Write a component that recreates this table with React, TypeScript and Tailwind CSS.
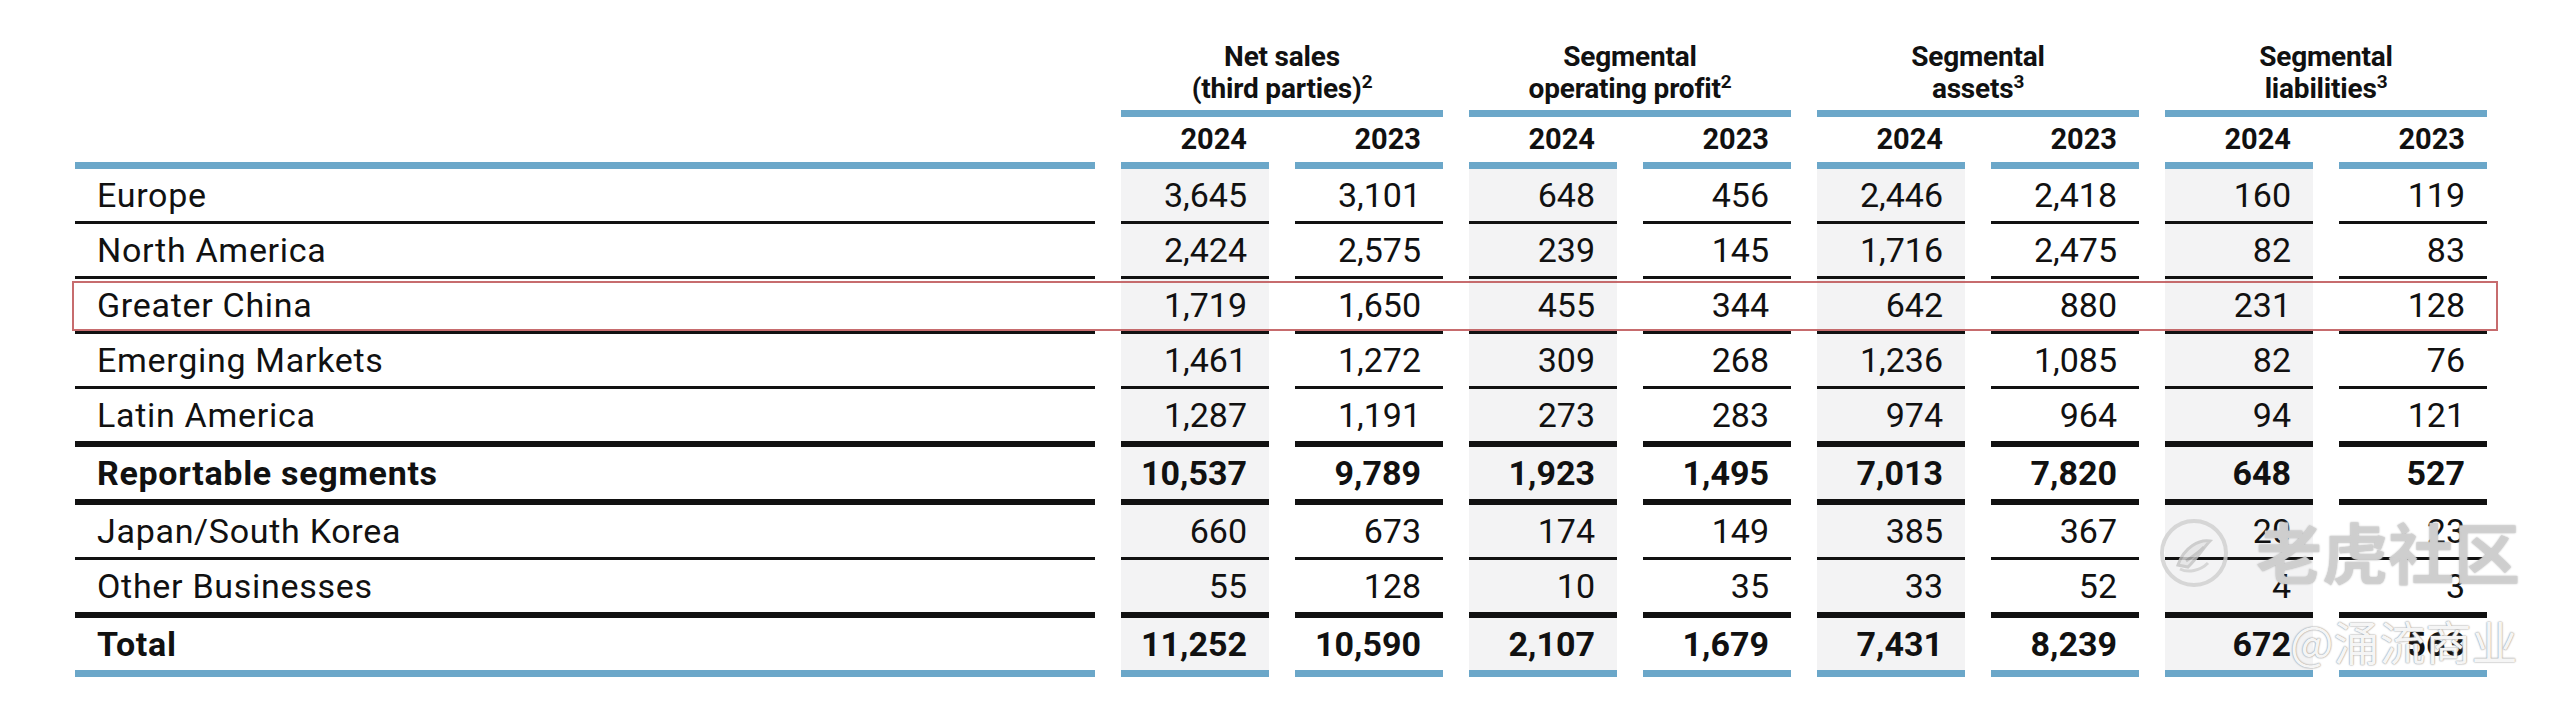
import React from "react";

type Sep = "thin" | "thick" | "blue";

type Row = {
  label: string;
  values: string[];
  bold?: boolean;
  sep: Sep;
};

const rows: Row[] = [
  { label: "Europe", values: ["3,645", "3,101", "648", "456", "2,446", "2,418", "160", "119"], sep: "thin" },
  { label: "North America", values: ["2,424", "2,575", "239", "145", "1,716", "2,475", "82", "83"], sep: "thin" },
  { label: "Greater China", values: ["1,719", "1,650", "455", "344", "642", "880", "231", "128"], sep: "thin" },
  { label: "Emerging Markets", values: ["1,461", "1,272", "309", "268", "1,236", "1,085", "82", "76"], sep: "thin" },
  { label: "Latin America", values: ["1,287", "1,191", "273", "283", "974", "964", "94", "121"], sep: "thick" },
  { label: "Reportable segments", values: ["10,537", "9,789", "1,923", "1,495", "7,013", "7,820", "648", "527"], bold: true, sep: "thick" },
  { label: "Japan/South Korea", values: ["660", "673", "174", "149", "385", "367", "20", "23"], sep: "thin" },
  { label: "Other Businesses", values: ["55", "128", "10", "35", "33", "52", "4", "3"], sep: "thick" },
  { label: "Total", values: ["11,252", "10,590", "2,107", "1,679", "7,431", "8,239", "672", "563"], bold: true, sep: "blue" },
];

const sepClass: Record<Sep, string> = {
  thin: "h-[55px] border-b-[3px] border-[#111111]",
  thick: "h-[58px] border-b-[6px] border-[#111111]",
  blue: "h-[59px] border-b-[7px] border-[#6ba7c9]",
};

const groups = [
  { top: "Net sales", bottom: "(third parties)", sup: "2" },
  { top: "Segmental", bottom: "operating profit", sup: "2" },
  { top: "Segmental", bottom: "assets", sup: "3" },
  { top: "Segmental", bottom: "liabilities", sup: "3" },
];

const years = ["2024", "2023", "2024", "2023", "2024", "2023", "2024", "2023"];

function TigerMark() {
  return (
    <svg width="72" height="72" viewBox="0 0 72 72" fill="none">
      <circle cx="36" cy="36" r="32" stroke="#cfcfcf" strokeWidth="4" />
      <path d="M20 48 C 26 30, 42 22, 52 24 C 46 30, 40 40, 30 50 Z" stroke="#c4c4c4" strokeWidth="3" fill="#e4e4e4" />
      <path d="M28 44 C 34 40, 40 36, 46 30" stroke="#bdbdbd" strokeWidth="3" />
      <path d="M22 52 C 30 56, 42 54, 50 46" stroke="#cfcfcf" strokeWidth="3" />
    </svg>
  );
}

export default function App() {
  return (
    <div className="relative w-[2565px] h-[701px] bg-white text-[#111111] font-['Roboto','Liberation_Sans',sans-serif] overflow-hidden">
      <div className="pl-[75px]">
        {/* group headers */}
        <div className="flex gap-[26px]">
          <div className="w-[1020px] shrink-0" />
          {groups.map((g, i) => (
            <div
              key={i}
              className="w-[322px] shrink-0 h-[117px] flex flex-col justify-end items-center pb-[5px] border-b-[7px] border-[#6ba7c9] text-[28px] leading-[32px] font-bold tracking-[-0.2px]"
            >
              <div>{g.top}</div>
              <div>
                {g.bottom}
                <sup className="text-[19px] top-[-0.55em]">{g.sup}</sup>
              </div>
            </div>
          ))}
        </div>

        {/* years */}
        <div className="flex gap-[26px]">
          <div className="w-[1020px] shrink-0 h-[52px] border-b-[7px] border-[#6ba7c9]" />
          {years.map((y, i) => (
            <div
              key={i}
              className="w-[148px] shrink-0 h-[52px] border-b-[7px] border-[#6ba7c9] flex items-center justify-end pr-[22px] text-[29px] font-bold"
            >
              {y}
            </div>
          ))}
        </div>

        {/* body */}
        {rows.map((r) => (
          <div key={r.label} className="flex gap-[26px]">
            <div
              className={`w-[1020px] shrink-0 flex items-center pl-[22px] text-[34px] tracking-[0.7px] ${sepClass[r.sep]} ${r.bold ? "font-bold" : "font-normal"}`}
            >
              {r.label}
            </div>
            {r.values.map((v, i) => (
              <div
                key={i}
                className={`w-[148px] shrink-0 flex items-center justify-end pr-[22px] text-[34px] ${sepClass[r.sep]} ${i % 2 === 0 ? "bg-[#f3f3f4]" : "bg-white"} ${r.bold ? "font-bold" : "font-normal"}`}
              >
                {v}
              </div>
            ))}
          </div>
        ))}
      </div>

      {/* highlight box */}
      <div className="absolute left-[72px] top-[281px] w-[2426px] h-[50px] border-2 border-[#b9474a]/80" />

      {/* watermarks */}
      <div className="absolute left-[2158px] top-[517px] opacity-80">
        <TigerMark />
      </div>
      <div className="absolute left-[2256px] top-[508px] text-[66px] leading-[84px] font-bold text-[#d2d2d2]/90 font-['Noto_Sans_CJK_SC',sans-serif] [text-shadow:0_0_2px_#a8a8a8]">
        老虎社区
      </div>
      <div className="absolute left-[2290px] top-[610px] text-[46px] leading-[60px] text-white/90 font-['Noto_Sans_CJK_SC',sans-serif] [text-shadow:0_0_2px_#9a9a9a,0_0_1px_#9a9a9a]">
        @涌流商业
      </div>
    </div>
  );
}
